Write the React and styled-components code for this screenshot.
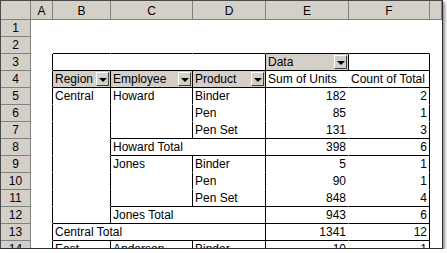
import React from "react";
import styled, { createGlobalStyle } from "styled-components";

const GlobalStyle = createGlobalStyle`
    html, body {
        margin: 0;
        padding: 0;
        background: #fff;
    }
    body {
        font-family: "Liberation Sans", Arial, sans-serif;
    }
`;

// Window frame with a drop shadow on the right and bottom
const Frame = styled.div`
    width: 443px;
    height: 249px;
    box-sizing: border-box;
    border: 1px solid #4a4a4a;
    border-right-color: #2e2e2e;
    border-bottom-color: #2e2e2e;
    box-shadow: 2px 2px 3px rgba(0, 0, 0, 0.45);
    overflow: hidden;
    background: #fff;
`;

const Sheet = styled.div`
    display: grid;
    grid-template-columns: 30px 22px 58px 82px 73px 83px 81px 12px;
    grid-template-rows: 19px repeat(14, 17px);
    font-size: 12px;
    color: #000;
`;

const HeadCell = styled.div`
    box-sizing: border-box;
    background: #d4d0c8;
    border-right: 1px solid #808080;
    border-bottom: 1px solid #808080;
    display: flex;
    align-items: center;
    justify-content: center;
    line-height: 1;
    padding-top: ${(p) => (p.$top ? "1px" : "0")};
`;

const Cell = styled.div`
    box-sizing: border-box;
    grid-column: span ${(p) => p.$span || 1};
    border-right: 1px solid ${(p) => (p.$r ? "#000" : "transparent")};
    border-bottom: 1px solid ${(p) => (p.$b ? "#000" : "transparent")};
    background: ${(p) => (p.$btn ? "#d4d0c8" : "#fff")};
    display: flex;
    align-items: center;
    justify-content: ${(p) => (p.$num ? "flex-end" : "space-between")};
    padding: 0 ${(p) => (p.$btn ? "1px" : "2px")} 0 2px;
    white-space: nowrap;
    overflow: hidden;
    line-height: 16px;
`;

const DropArrow = styled.span`
    box-sizing: border-box;
    width: 13px;
    height: 14px;
    flex: none;
    background: #d4d0c8;
    border-top: 1px solid #fff;
    border-left: 1px solid #fff;
    border-right: 1px solid #404040;
    border-bottom: 1px solid #404040;
    display: flex;
    align-items: center;
    justify-content: center;

    &::after {
        content: "";
        width: 0;
        height: 0;
        border-left: 4px solid transparent;
        border-right: 4px solid transparent;
        border-top: 4px solid #000;
        margin-top: 1px;
    }
`;

const letters = ["A", "B", "C", "D", "E", "F", ""];

const rows = [
    [{}, {}, {}, {}, {}, {}, {}],
    [{}, { b: 1 }, { b: 1 }, { b: 1 }, { b: 1 }, { b: 1 }, {}],
    [{ r: 1 }, { span: 3, r: 1, b: 1 }, { t: "Data", btn: 1, r: 1, b: 1 }, { r: 1, b: 1 }, {}],
    [
        { r: 1 },
        { t: "Region", btn: 1, r: 1, b: 1 },
        { t: "Employee", btn: 1, r: 1, b: 1 },
        { t: "Product", btn: 1, r: 1, b: 1 },
        { t: "Sum of Units", b: 1 },
        { t: "Count of Total", r: 1, b: 1 },
        {}
    ],
    [{ r: 1 }, { t: "Central", r: 1 }, { t: "Howard", r: 1 }, { t: "Binder", r: 1 }, { t: "182" }, { t: "2", r: 1 }, {}],
    [{ r: 1 }, { r: 1 }, { r: 1 }, { t: "Pen", r: 1 }, { t: "85" }, { t: "1", r: 1 }, {}],
    [{ r: 1 }, { r: 1 }, { r: 1, b: 1 }, { t: "Pen Set", r: 1, b: 1 }, { t: "131", b: 1 }, { t: "3", r: 1, b: 1 }, {}],
    [{ r: 1 }, { r: 1 }, { t: "Howard Total", span: 2, r: 1, b: 1 }, { t: "398", b: 1 }, { t: "6", r: 1, b: 1 }, {}],
    [{ r: 1 }, { r: 1 }, { t: "Jones", r: 1 }, { t: "Binder", r: 1 }, { t: "5" }, { t: "1", r: 1 }, {}],
    [{ r: 1 }, { r: 1 }, { r: 1 }, { t: "Pen", r: 1 }, { t: "90" }, { t: "1", r: 1 }, {}],
    [{ r: 1 }, { r: 1 }, { r: 1, b: 1 }, { t: "Pen Set", r: 1, b: 1 }, { t: "848", b: 1 }, { t: "4", r: 1, b: 1 }, {}],
    [{ r: 1 }, { r: 1, b: 1 }, { t: "Jones Total", span: 2, r: 1, b: 1 }, { t: "943", b: 1 }, { t: "6", r: 1, b: 1 }, {}],
    [{ r: 1 }, { t: "Central Total", span: 3, r: 1, b: 1 }, { t: "1341", b: 1 }, { t: "12", r: 1, b: 1 }, {}],
    [{ r: 1 }, { t: "East", r: 1 }, { t: "Anderson", r: 1 }, { t: "Binder", r: 1 }, { t: "10" }, { t: "1", r: 1 }, {}]
];

function App() {
    return (
        <>
            <GlobalStyle />
            <Frame>
                <Sheet>
                    <HeadCell />
                    {letters.map((l, i) => (
                        <HeadCell key={i} $top>
                            {l}
                        </HeadCell>
                    ))}
                    {rows.map((row, ri) => (
                        <React.Fragment key={ri}>
                            <HeadCell>{ri + 1}</HeadCell>
                            {row.map((c, ci) => (
                                <Cell
                                    key={ci}
                                    $span={c.span}
                                    $r={c.r}
                                    $b={c.b}
                                    $btn={c.btn}
                                    $num={c.t && /^\d+$/.test(c.t)}
                                >
                                    {c.t && <span>{c.t}</span>}
                                    {c.btn && <DropArrow />}
                                </Cell>
                            ))}
                        </React.Fragment>
                    ))}
                </Sheet>
            </Frame>
        </>
    );
}

export default App;
